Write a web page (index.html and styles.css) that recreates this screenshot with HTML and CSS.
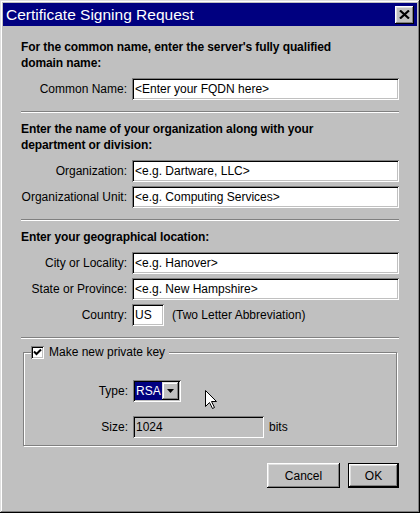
FILE: index.html
```html
<!DOCTYPE html>
<html>
<head>
<meta charset="utf-8">
<title>Certificate Signing Request</title>
<link rel="stylesheet" href="styles.css">
</head>
<body>
<div class="window">
  <div class="titlebar">
    <span class="title">Certificate Signing Request</span>
    <button class="close" type="button" aria-label="Close">
      <svg width="11" height="9" viewBox="0 0 11 9"><path d="M1 0.5 L10 8.5 M10 0.5 L1 8.5" stroke="#000" stroke-width="2.2" fill="none"/></svg>
    </button>
  </div>
  <div class="content">
    <div class="heading">For the common name, enter the server's fully qualified<br>domain name:</div>
    <div class="rows">
      <span class="label">Common Name:</span>
      <div class="field">&lt;Enter your FQDN here&gt;</div>
    </div>
    <div class="sep"></div>
    <div class="heading">Enter the name of your organization along with your<br>department or division:</div>
    <div class="rows">
      <span class="label">Organization:</span>
      <div class="field">&lt;e.g. Dartware, LLC&gt;</div>
      <span class="label">Organizational Unit:</span>
      <div class="field">&lt;e.g. Computing Services&gt;</div>
    </div>
    <div class="sep"></div>
    <div class="heading">Enter your geographical location:</div>
    <div class="rows">
      <span class="label">City or Locality:</span>
      <div class="field">&lt;e.g. Hanover&gt;</div>
      <span class="label">State or Province:</span>
      <div class="field">&lt;e.g. New Hampshire&gt;</div>
      <span class="label">Country:</span>
      <div class="inline">
        <div class="field country">US</div>
        <span>(Two Letter Abbreviation)</span>
      </div>
    </div>
    <div class="sep"></div>
    <div class="group">
      <div class="legend">
        <span class="checkbox">
          <svg width="9" height="9" viewBox="0 0 9 9"><path d="M1 3.5 L3.5 6 L8 1.5" stroke="#000" stroke-width="2" fill="none"/></svg>
        </span>
        <span>Make new private key</span>
      </div>
      <div class="grows">
        <span class="label">Type:</span>
        <div class="combo">
          <span class="combo-sel">RSA</span>
          <span class="combo-btn"><svg width="7" height="4" viewBox="0 0 7 4"><path d="M0 0 H7 L3.5 4 Z" fill="#000"/></svg></span>
        </div>
        <span class="label">Size:</span>
        <div class="inline tight">
          <div class="field disabled">1024</div>
          <span>bits</span>
        </div>
      </div>
    </div>
    <div class="buttons">
      <button class="btn cancel" type="button">Cancel</button>
      <button class="btn ok" type="button">OK</button>
    </div>
  </div>
  <svg class="cursor" width="13" height="20" viewBox="0 0 13 20"><path d="M0.5 0.5 L0.5 16.5 L4.5 12.5 L7.5 18.5 L9.5 17.5 L6.5 11.5 L11.5 11.5 Z" fill="#fff" stroke="#000" stroke-width="1"/></svg>
</div>
</body>
</html>
```
FILE: styles.css
```css
html, body {
  margin: 0;
  padding: 0;
  background: #c0c0c0;
}

.window {
  position: relative;
  width: 420px;
  height: 513px;
  box-sizing: border-box;
  padding: 3px;
  background: #c0c0c0;
  box-shadow: inset -1px -1px 0 #000, inset 1px 1px 0 #dfdfdf, inset -2px -2px 0 #808080, inset 2px 2px 0 #fff;
  display: flex;
  flex-direction: column;
  font-family: "Liberation Sans", Arial, sans-serif;
  font-size: 12px;
  color: #000;
}

.titlebar {
  flex-shrink: 0;
  height: 23px;
  background: #000080;
  color: #fff;
  display: flex;
  align-items: center;
  justify-content: space-between;
  padding: 0 3px;
  font-size: 15.5px;
}

.title {
  white-space: nowrap;
}

.close {
  width: 19px;
  height: 18px;
  padding: 0;
  border: 0;
  background: #c0c0c0;
  box-shadow: inset -1px -1px 0 #000, inset 1px 1px 0 #fff, inset -2px -2px 0 #808080, inset 2px 2px 0 #dfdfdf;
  display: flex;
  align-items: center;
  justify-content: center;
}

.content {
  flex: 1;
  padding: 13px 18px 0 18px;
}

.heading {
  font-weight: bold;
  line-height: 16px;
  margin-bottom: 7px;
  white-space: nowrap;
  letter-spacing: -0.1px;
}

.rows {
  display: grid;
  grid-template-columns: 106px 1fr;
  column-gap: 5px;
  row-gap: 4px;
  align-items: center;
}

.label {
  text-align: right;
  white-space: nowrap;
}

.field {
  height: 22px;
  box-sizing: border-box;
  background: #fff;
  box-shadow: inset 1px 1px 0 #808080, inset -1px -1px 0 #fff, inset 2px 2px 0 #000, inset -2px -2px 0 #c0c0c0;
  padding: 0 3px;
  display: flex;
  align-items: center;
  white-space: nowrap;
}

.field.country {
  width: 32px;
}

.field.disabled {
  width: 131px;
  background: #c0c0c0;
}

.inline {
  display: flex;
  align-items: center;
  gap: 8px;
}

.inline.tight {
  gap: 5px;
}

.sep {
  height: 2px;
  box-sizing: border-box;
  border-top: 1px solid #808080;
  border-bottom: 1px solid #fff;
  margin: 11px 0 8px;
}

.group {
  position: relative;
  margin: 13px 2px 0 2px;
  border: 1px solid #808080;
  box-shadow: inset 1px 1px 0 #fff, 1px 1px 0 #fff;
  padding: 27px 0 7px 0;
}

.legend {
  position: absolute;
  top: -7px;
  left: 7px;
  height: 13px;
  display: flex;
  align-items: center;
  gap: 5px;
  padding-right: 4px;
  background: #c0c0c0;
  line-height: 13px;
}

.checkbox {
  width: 13px;
  height: 13px;
  box-sizing: border-box;
  background: #fff;
  box-shadow: inset 1px 1px 0 #808080, inset -1px -1px 0 #fff, inset 2px 2px 0 #000, inset -2px -2px 0 #c0c0c0;
  display: flex;
  align-items: center;
  justify-content: center;
}

.grows {
  display: grid;
  grid-template-columns: 104px 1fr;
  column-gap: 5px;
  row-gap: 14px;
  align-items: center;
  justify-items: start;
}

.grows .label {
  justify-self: end;
}

.combo {
  width: 48px;
  height: 22px;
  box-sizing: border-box;
  padding: 2px;
  background: #fff;
  box-shadow: inset 1px 1px 0 #808080, inset -1px -1px 0 #fff, inset 2px 2px 0 #000, inset -2px -2px 0 #c0c0c0;
  display: flex;
}

.combo-sel {
  flex: 1;
  background: #000080;
  color: #fff;
  display: flex;
  align-items: center;
  padding-left: 1px;
  font-size: 12px;
}

.combo-btn {
  width: 17px;
  background: #c0c0c0;
  box-shadow: inset -1px -1px 0 #000, inset 1px 1px 0 #dfdfdf, inset -2px -2px 0 #808080, inset 2px 2px 0 #fff;
  display: flex;
  align-items: center;
  justify-content: center;
}

.buttons {
  display: flex;
  justify-content: flex-end;
  gap: 8px;
  margin-top: 17px;
}

.btn {
  height: 25px;
  padding: 0;
  border: 0;
  background: #c0c0c0;
  font-family: "Liberation Sans", Arial, sans-serif;
  font-size: 12px;
  color: #000;
  box-shadow: inset -1px -1px 0 #000, inset 1px 1px 0 #fff, inset -2px -2px 0 #808080, inset 2px 2px 0 #dfdfdf;
}

.btn.cancel {
  width: 73px;
}

.btn.ok {
  width: 51px;
  box-shadow: inset 0 0 0 1px #000, inset -2px -2px 0 #000, inset 2px 2px 0 #fff, inset -3px -3px 0 #808080, inset 3px 3px 0 #dfdfdf;
}

.cursor {
  position: absolute;
  left: 205px;
  top: 390px;
}
```
